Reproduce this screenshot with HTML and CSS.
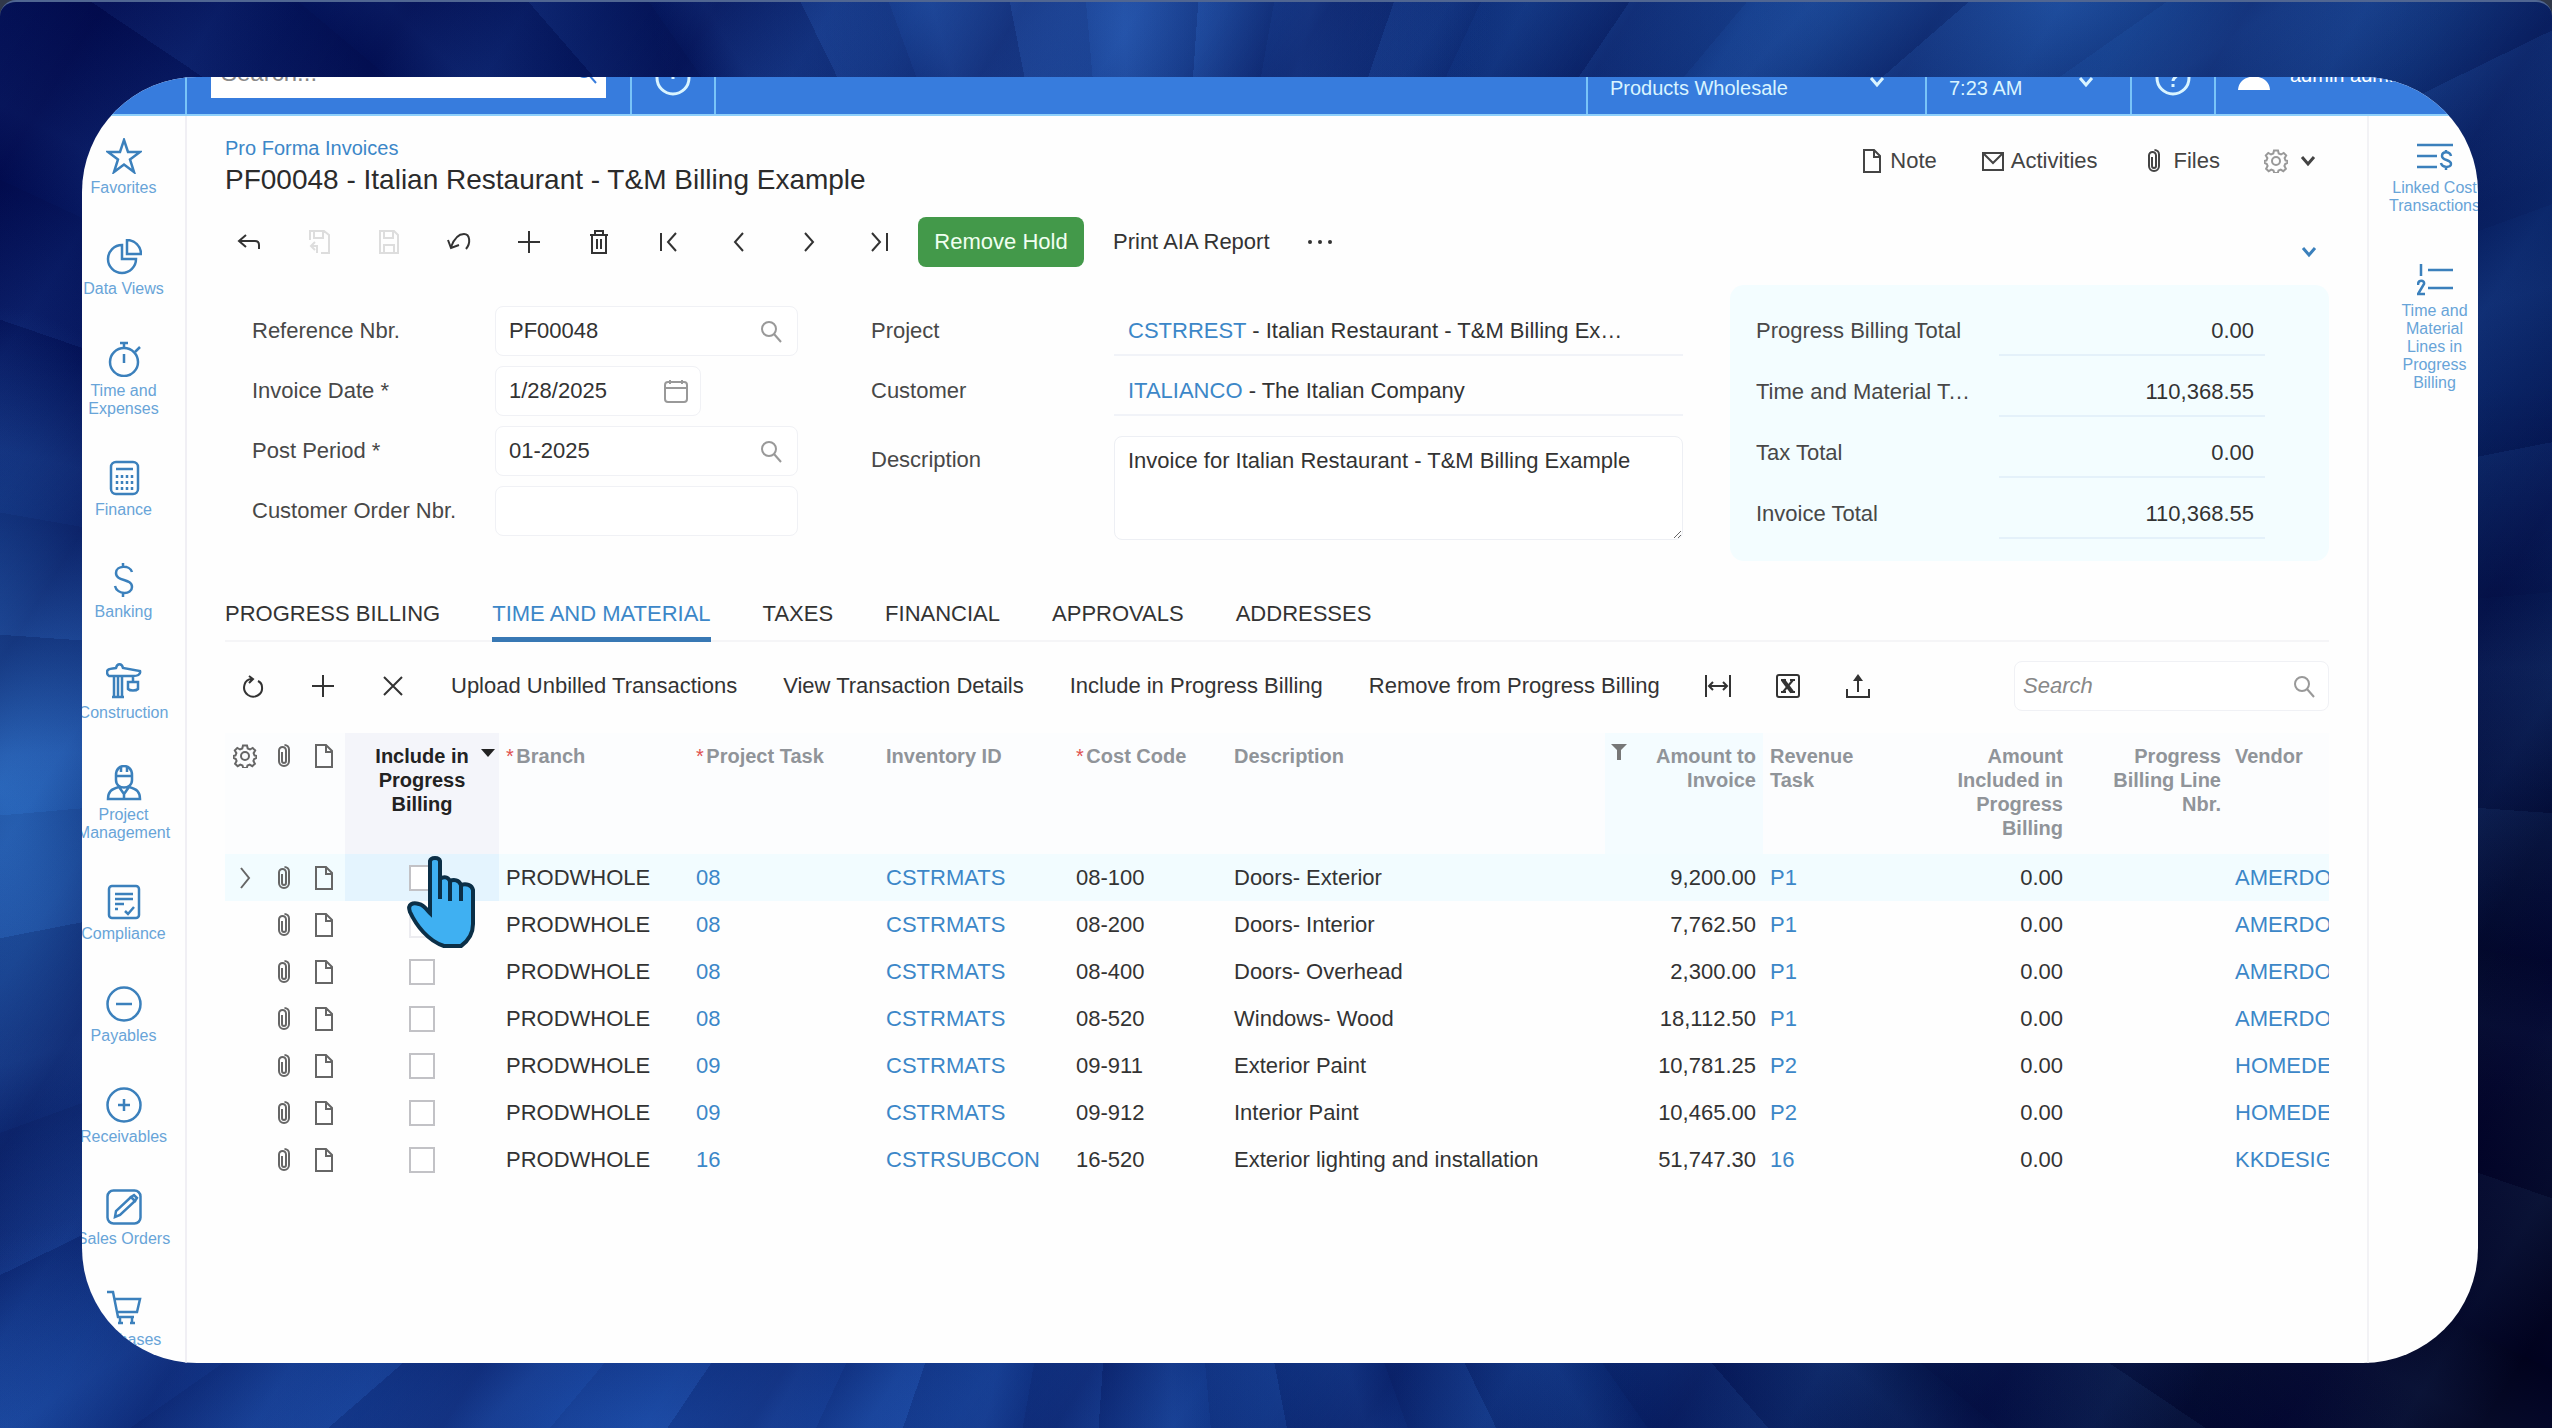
FILE: index.html
```html
<!DOCTYPE html>
<html lang="en">
<head>
<meta charset="utf-8">
<title>PF00048 - Pro Forma Invoices</title>
<link rel="stylesheet" href="styles.css">
</head>
<body>
<svg class="sprite" aria-hidden="true">
  <symbol id="i-clip" viewBox="0 0 24 24"><path d="M17 8v9a5 5 0 0 1-10 0V6.500a3.500 3.500 0 0 1 7 0V17a2 2 0 0 1-4 0V8M17 8V5.500A4.500 4.500 0 0 0 12.500 1"/></symbol>
  <symbol id="i-doc" viewBox="0 0 24 24"><path d="M4 1h10l6 6v16H4zM14 1v7h6"/></symbol>
  <symbol id="i-gear" viewBox="0 0 24 24"><circle cx="12" cy="12" r="4"/><path d="M10 1.500h4l.7 3 2.300 1 2.700-1.600 2.500 2.600-1.600 2.700.9 2.200 2 .6v2l-2.300 1-.8 2 1.500 2.700-2.600 2.500-2.600-1.600-2.200.9-.7 2.500h-3.600l-.7-2.500-2.200-.9-2.600 1.600-2.600-2.500 1.500-2.700-.8-2-2.300-1v-2l2-.6.9-2.200-1.600-2.700 2.500-2.600L7 5.500l2.300-1z"/></symbol>
  <symbol id="i-mail" viewBox="0 0 24 24"><path d="M2 4h20v17H2zM2 4l10 10L22 4"/></symbol>
  <symbol id="i-search" viewBox="0 0 24 24"><circle cx="10" cy="10" r="7"/><path d="M15 15l7 8"/></symbol>
  <symbol id="i-down" viewBox="0 0 24 24"><path d="M6 8l6 7 6-7"/></symbol>
  <symbol id="i-plus" viewBox="0 0 24 24"><path d="M12 1v22M1 12h22"/></symbol>
</svg>

<div class="stage">
<div class="card">
  <header class="topbar">
    <div class="logo-area"></div>
    <div class="bar-cell search-cell"><input class="top-search" type="text" aria-label="Search everywhere" placeholder="Search..."><svg class="ico top-mag"><use href="#i-search"/></svg></div>
    <button class="bar-cell low" aria-label="Recent"><svg class="round-ico" viewBox="0 0 36 36"><circle cx="18" cy="18" r="16"/><path d="M18 9v10"/></svg></button>
    <div class="bar-cell filler"></div>
    <button class="bar-cell branch"><span>Products Wholesale</span><svg class="ico bold"><use href="#i-down"/></svg></button>
    <button class="bar-cell clock"><span>7:23 AM</span><svg class="ico bold"><use href="#i-down"/></svg></button>
    <button class="bar-cell low" aria-label="Help"><svg class="round-ico" viewBox="0 0 36 36"><circle cx="18" cy="18" r="16"/><path d="M13 14c0-7 10-6 10-1 0 4-5 4-5 8M18 24v3"/></svg></button>
    <button class="bar-cell user"><svg class="user-ico" viewBox="0 0 32 32"><circle cx="16" cy="8" r="7"/><path d="M0 31c1-18 31-18 32 0z"/></svg><span>admin admin</span></button>
  </header>

  <div class="body">
    <nav class="sidebar">
      <a href="#"><svg viewBox="0 0 36 36"><path d="M18 2l4 12h12l-10 7.500 4 12.500-10-7.500L8 34l4-12.500L2 14h12z"/></svg>Favorites</a>
      <a href="#"><svg viewBox="0 0 36 36"><path d="M16 6a14 14 0 1 0 14 14H16zM21 1v14h14A14 14 0 0 0 21 1z"/></svg>Data Views</a>
      <a href="#"><svg viewBox="0 0 36 36"><circle cx="18" cy="21" r="14"/><path d="M14 2h8M18 2v5M29 11l5-5M18 13v9"/></svg>Time and<br>Expenses</a>
      <a href="#"><svg viewBox="0 0 36 36"><rect x="5" y="2" width="27" height="32" rx="5"/><path d="M10 9h17"/><path stroke-dasharray="3 3" d="M11 15v15M16 15v15M21 15v15M26 15v15"/></svg>Finance</a>
      <a href="#"><svg viewBox="0 0 36 36"><path d="M26 10c-2-7-16-7-16 1 0 9 16 5 16 14 0 8-15 8-17-1M17 1v4M17 31v4"/></svg>Banking</a>
      <a href="#"><svg viewBox="0 0 36 36"><path d="M1 9c0-4 5-3 9-4 1-5 6-5 7 0l17 3c1 4-3 5-7 5H3c-2-1-2-2-2-4zM8 13v20M12 13v20M16 13v20M6 34h12M27 13v5M22 19h10v7c-2 2-8 2-10 0z"/></svg>Construction</a>
      <a href="#"><svg viewBox="0 0 36 36"><path d="M9 11h18M10 10c0-12 16-12 16 0v5c0 10-16 10-16 0zM15 2v5M21 2v5M13 22C5 24 2 27 2 34h32c0-7-3-10-11-12l-5 7zM18 29v4"/></svg>Project<br>Management</a>
      <a href="#"><svg viewBox="0 0 36 36"><rect x="3" y="2" width="30" height="32" rx="3"/><path d="M9 10h18M9 15h18M9 20h9M9 25h3M19 27l3 3 6-7"/></svg>Compliance</a>
      <a href="#"><svg viewBox="0 0 36 36"><circle cx="18" cy="18" r="16.500"/><path d="M10 18h16"/></svg>Payables</a>
      <a href="#"><svg viewBox="0 0 36 36"><circle cx="18" cy="18" r="16.500"/><path d="M12 18h12M18 12v12"/></svg>Receivables</a>
      <a href="#"><svg viewBox="0 0 36 36"><rect x="1.500" y="1.500" width="33" height="33" rx="6"/><path d="M9 28l1-6L25 8l4 4-15 14zM25 8l3-2 3 3-2 3z"/></svg>Sales Orders</a>
      <a href="#"><svg viewBox="0 0 36 36"><path d="M1 2h6l5 25h16M8 9h26l-3 13H11M14 27v6M26 27v6M12 33h5M24 33h5"/></svg>Purchases</a>
    </nav>

    <main class="main">
      <div class="head">
        <div>
          <a class="crumb" href="#">Pro Forma Invoices</a>
          <h1>PF00048 - Italian Restaurant - T&amp;M Billing Example</h1>
        </div>
        <div class="head-actions">
          <button><svg class="ico"><use href="#i-doc"/></svg>Note</button>
          <button><svg class="ico"><use href="#i-mail"/></svg>Activities</button>
          <button class="files"><svg class="ico"><use href="#i-clip"/></svg>Files</button>
          <button class="cog" aria-label="Settings"><svg class="ico soft"><use href="#i-gear"/></svg><svg class="ico bold"><use href="#i-down"/></svg></button>
        </div>
      </div>

      <div class="toolbar">
        <button class="tb" aria-label="Back"><svg class="ico" viewBox="0 0 24 24"><path d="M9 5L2 11l7 6M2 11h16c3 0 4 2 4 4v4"/></svg></button>
        <button class="tb off" aria-label="Save and close"><svg class="ico" viewBox="0 0 24 24"><path d="M3 10V1h14l5 4v18h-8M7 1v7h9V1M8 12l-4 4 4 4M4 16h6v7"/></svg></button>
        <button class="tb off" aria-label="Save"><svg class="ico" viewBox="0 0 24 24"><path d="M3 1h14l4 4v18H3zM7 1v7h9V1M7 23v-8h10v8"/></svg></button>
        <button class="tb" aria-label="Undo"><svg class="ico" viewBox="0 0 24 24"><path d="M1 10l3 8 8-3M4 17C7 9 12 4 17 4c6 0 7 9 2 15"/></svg></button>
        <button class="tb" aria-label="Add"><svg class="ico"><use href="#i-plus"/></svg></button>
        <button class="tb" aria-label="Delete"><svg class="ico" viewBox="0 0 24 24"><path d="M3 5h18M8 5V1h8v4M5 5v18h14V5M10 9v10M14 9v10"/></svg></button>
        <button class="tb" aria-label="First"><svg class="ico" viewBox="0 0 24 24"><path d="M4 3v18M19 3l-8 9 8 9"/></svg></button>
        <button class="tb" aria-label="Previous"><svg class="ico" viewBox="0 0 24 24"><path d="M16 3l-8 9 8 9"/></svg></button>
        <button class="tb" aria-label="Next"><svg class="ico" viewBox="0 0 24 24"><path d="M8 3l8 9-8 9"/></svg></button>
        <button class="tb" aria-label="Last"><svg class="ico" viewBox="0 0 24 24"><path d="M20 3v18M5 3l8 9-8 9"/></svg></button>
        <button class="hold">Remove Hold</button>
        <button class="report">Print AIA Report</button>
        <button class="tb" aria-label="More"><svg class="ico dots" viewBox="0 0 24 24"><circle cx="2" cy="12" r="2"/><circle cx="12" cy="12" r="2"/><circle cx="22" cy="12" r="2"/></svg></button>
        <button class="collapse" aria-label="Collapse"><svg class="ico bold"><use href="#i-down"/></svg></button>
      </div>

      <form class="summary">
        <div class="col">
          <div class="row"><label for="ref">Reference Nbr.</label><div class="field"><input id="ref" value="PF00048"><svg class="ico soft"><use href="#i-search"/></svg></div></div>
          <div class="row"><label for="date">Invoice Date *</label><div class="field short"><input id="date" value="1/28/2025"><svg class="ico soft" viewBox="0 0 24 24"><rect x="1" y="3" width="22" height="20" rx="3"/><path d="M1 9h22M6 1v4M18 1v4"/></svg></div></div>
          <div class="row"><label for="period">Post Period *</label><div class="field"><input id="period" value="01-2025"><svg class="ico soft"><use href="#i-search"/></svg></div></div>
          <div class="row"><label for="order">Customer Order Nbr.</label><div class="field"><input id="order" value=""></div></div>
        </div>
        <div class="col mid">
          <div class="row"><span class="label">Project</span><div class="static"><a href="#">CSTRREST</a> - Italian Restaurant - T&amp;M Billing Example</div></div>
          <div class="row"><span class="label">Customer</span><div class="static"><a href="#">ITALIANCO</a> - The Italian Company</div></div>
          <div class="row area"><label for="desc">Description</label><textarea id="desc">Invoice for Italian Restaurant - T&amp;M Billing Example</textarea></div>
        </div>
        <div class="col totals">
          <div class="row"><span class="label">Progress Billing Total</span><output>0.00</output></div>
          <div class="row"><span class="label">Time and Material Total</span><output>110,368.55</output></div>
          <div class="row"><span class="label">Tax Total</span><output>0.00</output></div>
          <div class="row"><span class="label">Invoice Total</span><output>110,368.55</output></div>
        </div>
      </form>

      <div class="tabs" role="tablist">
        <button role="tab">PROGRESS BILLING</button>
        <button role="tab" class="active" aria-selected="true">TIME AND MATERIAL</button>
        <button role="tab">TAXES</button>
        <button role="tab">FINANCIAL</button>
        <button role="tab">APPROVALS</button>
        <button role="tab">ADDRESSES</button>
      </div>

      <div class="gridbar">
        <button class="tb" aria-label="Refresh"><svg class="ico" viewBox="0 0 24 24"><path d="M8 2l4 3-4 4M12 5C3 4 0 16 7 21c6 4 15 0 14-8 0-3-2-5-4-6"/></svg></button>
        <button class="tb" aria-label="Add row"><svg class="ico"><use href="#i-plus"/></svg></button>
        <button class="tb" aria-label="Delete row"><svg class="ico" viewBox="0 0 24 24"><path d="M3 3l18 18M21 3L3 21"/></svg></button>
        <button class="txt">Upload Unbilled Transactions</button>
        <button class="txt">View Transaction Details</button>
        <button class="txt">Include in Progress Billing</button>
        <button class="txt">Remove from Progress Billing</button>
        <button class="tb" aria-label="Fit columns"><svg class="ico wide" viewBox="0 0 28 24"><path d="M2 1v22M26 1v22M6 12h16M9 8l-4 4 4 4M19 8l4 4-4 4"/></svg></button>
        <button class="tb" aria-label="Export"><svg class="ico" viewBox="0 0 24 24"><rect x="1" y="1" width="22" height="22" rx="2"/><path class="heavy" d="M7 6l9 12"/><path d="M17 6L7 18M5 6h5M14 18h5M14 6h5M5 18h5"/></svg></button>
        <button class="tb" aria-label="Upload"><svg class="ico" viewBox="0 0 24 24"><path d="M1 15v8h22v-8M12 18V3"/><path class="solid" d="M12 0l5 7H7z"/></svg></button>
        <div class="field grid-search"><input type="text" aria-label="Search rows" placeholder="Search"><svg class="ico soft"><use href="#i-search"/></svg></div>
      </div>

      <div class="grid-wrap">
      <table>
        <colgroup><col class="c-i"><col class="c-i"><col class="c-d"><col class="c-inc"><col class="c-txt"><col class="c-txt"><col class="c-txt"><col class="c-num"><col><col class="c-num"><col class="c-num"><col class="c-amt"><col class="c-num"><col class="c-ven"></colgroup>
        <thead><tr>
          <th class="ic"><svg class="ico"><use href="#i-gear"/></svg></th>
          <th class="ic"><svg class="ico"><use href="#i-clip"/></svg></th>
          <th class="ic"><svg class="ico"><use href="#i-doc"/></svg></th>
          <th class="inc">Include in Progress Billing<span class="sort"></span></th>
          <th><i>*</i> Branch</th><th><i>*</i> Project Task</th><th>Inventory ID</th><th><i>*</i> Cost Code</th><th>Description</th>
          <th class="num filtered"><svg class="funnel" viewBox="0 0 16 16"><path d="M0 0h16L10 6v10H6V6z"/></svg>Amount to Invoice</th>
          <th>Revenue<br>Task</th><th class="num">Amount Included in Progress Billing</th><th class="num">Progress Billing Line Nbr.</th><th>Vendor</th>
        </tr></thead>
        <tbody>
          <tr class="current"><td class="ic"><svg class="ico" viewBox="0 0 24 24"><path d="M8 2l8 10-8 10"/></svg></td><td class="ic"><svg class="ico"><use href="#i-clip"/></svg></td><td class="ic"><svg class="ico"><use href="#i-doc"/></svg></td><td class="inc"><input type="checkbox" aria-label="Include 08-100"><svg class="pointer" viewBox="0 0 68 92" aria-hidden="true"><path d="M22 4c1-4 9-4 10 0v18c4-3 8-2 10 2 4-2 9-1 11 4 5-2 11 0 12 5v34c0 10-5 17-12 22H36C20 84 8 68 2 55c-3-8 3-10 9-8 5 1 8 6 11 9z"/><path d="M32 22v20M42 24v20M53 28v16"/></svg></td><td>PRODWHOLE</td><td><a href="#">08</a></td><td><a href="#">CSTRMATS</a></td><td>08-100</td><td>Doors- Exterior</td><td class="num">9,200.00</td><td><a href="#">P1</a></td><td class="num">0.00</td><td></td><td><a href="#">AMERDOOR</a></td></tr>
          <tr><td></td><td class="ic"><svg class="ico"><use href="#i-clip"/></svg></td><td class="ic"><svg class="ico"><use href="#i-doc"/></svg></td><td class="inc"><input class="faint" type="checkbox" aria-label="Include 08-200"></td><td>PRODWHOLE</td><td><a href="#">08</a></td><td><a href="#">CSTRMATS</a></td><td>08-200</td><td>Doors- Interior</td><td class="num">7,762.50</td><td><a href="#">P1</a></td><td class="num">0.00</td><td></td><td><a href="#">AMERDOOR</a></td></tr>
          <tr><td></td><td class="ic"><svg class="ico"><use href="#i-clip"/></svg></td><td class="ic"><svg class="ico"><use href="#i-doc"/></svg></td><td class="inc"><input type="checkbox" aria-label="Include 08-400"></td><td>PRODWHOLE</td><td><a href="#">08</a></td><td><a href="#">CSTRMATS</a></td><td>08-400</td><td>Doors- Overhead</td><td class="num">2,300.00</td><td><a href="#">P1</a></td><td class="num">0.00</td><td></td><td><a href="#">AMERDOOR</a></td></tr>
          <tr><td></td><td class="ic"><svg class="ico"><use href="#i-clip"/></svg></td><td class="ic"><svg class="ico"><use href="#i-doc"/></svg></td><td class="inc"><input type="checkbox" aria-label="Include 08-520"></td><td>PRODWHOLE</td><td><a href="#">08</a></td><td><a href="#">CSTRMATS</a></td><td>08-520</td><td>Windows- Wood</td><td class="num">18,112.50</td><td><a href="#">P1</a></td><td class="num">0.00</td><td></td><td><a href="#">AMERDOOR</a></td></tr>
          <tr><td></td><td class="ic"><svg class="ico"><use href="#i-clip"/></svg></td><td class="ic"><svg class="ico"><use href="#i-doc"/></svg></td><td class="inc"><input type="checkbox" aria-label="Include 09-911"></td><td>PRODWHOLE</td><td><a href="#">09</a></td><td><a href="#">CSTRMATS</a></td><td>09-911</td><td>Exterior Paint</td><td class="num">10,781.25</td><td><a href="#">P2</a></td><td class="num">0.00</td><td></td><td><a href="#">HOMEDEPOT</a></td></tr>
          <tr><td></td><td class="ic"><svg class="ico"><use href="#i-clip"/></svg></td><td class="ic"><svg class="ico"><use href="#i-doc"/></svg></td><td class="inc"><input type="checkbox" aria-label="Include 09-912"></td><td>PRODWHOLE</td><td><a href="#">09</a></td><td><a href="#">CSTRMATS</a></td><td>09-912</td><td>Interior Paint</td><td class="num">10,465.00</td><td><a href="#">P2</a></td><td class="num">0.00</td><td></td><td><a href="#">HOMEDEPOT</a></td></tr>
          <tr><td></td><td class="ic"><svg class="ico"><use href="#i-clip"/></svg></td><td class="ic"><svg class="ico"><use href="#i-doc"/></svg></td><td class="inc"><input type="checkbox" aria-label="Include 16-520"></td><td>PRODWHOLE</td><td><a href="#">16</a></td><td><a href="#">CSTRSUBCON</a></td><td>16-520</td><td>Exterior lighting and installation</td><td class="num">51,747.30</td><td><a href="#">16</a></td><td class="num">0.00</td><td></td><td><a href="#">KKDESIGN</a></td></tr>
        </tbody>
      </table>
      </div>
    </main>

    <aside class="rail">
      <a href="#"><svg viewBox="0 0 36 36"><path d="M0 7h36M0 18h20M0 29h20"/><path d="M34 18c-1-5-9-5-9 0 0 5 9 3 9 8 0 4-9 4-10-1M29 12v3M29 29v3"/></svg>Linked Cost<br>Transactions</a>
      <a href="#"><svg viewBox="0 0 36 36"><path d="M4 3v12M11 9h25M11 27h25M1 24c0-6 7-5 6-1L1 33h7"/></svg>Time and<br>Material<br>Lines in<br>Progress<br>Billing</a>
    </aside>
  </div>
</div>
</div>
</body>
</html>
```
FILE: styles.css
```css
* { box-sizing: border-box; }

html { background: #30384a; }

body {
  margin: 0;
  font-family: "Liberation Sans", Arial, sans-serif;
  font-size: 22px;
  line-height: 28px;
  color: #333;
}

button, input, textarea { font: inherit; color: inherit; }
button { border: 0; padding: 0; background: none; white-space: nowrap; }
a { color: #3c87c8; text-decoration: none; }

.sprite { display: none; }

.ico {
  width: 24px;
  height: 24px;
  flex: none;
  fill: none;
  stroke: currentColor;
  stroke-width: 2;
}
.soft { color: #999; }
.bold { stroke-width: 3; }

/* Decorated backdrop */
.stage {
  display: flex;
  min-height: 100vh;
  padding: 75px 74px 65px 82px;
  border-top: 2px solid #506692;
  border-radius: 16px 16px 0 0;
  background:
    repeating-conic-gradient(from 4deg at 45% 50%, rgba(90, 150, 240, 0.06) 0deg, rgba(0, 0, 50, 0.1) 6deg, rgba(0, 0, 50, 0.02) 6deg, rgba(90, 150, 240, 0.06) 9deg, rgba(0, 0, 50, 0.12) 15deg),
    repeating-linear-gradient(122deg, rgba(0, 0, 60, 0) 0, rgba(0, 0, 60, 0.25) 90px, rgba(60, 120, 220, 0.08) 190px, rgba(0, 0, 60, 0) 260px),
    radial-gradient(ellipse 240px 480px at 0 55%, #2c6fc4, rgba(44, 111, 196, 0)),
    radial-gradient(ellipse 420px 300px at 42% 0, #2455ac, rgba(36, 85, 172, 0)),
    radial-gradient(ellipse 700px 260px at 80% 0, #1c4c9c, rgba(28, 76, 156, 0)),
    radial-gradient(ellipse 1000px 260px at 26% 100%, #1a4aa6, rgba(26, 74, 166, 0)),
    radial-gradient(ellipse 900px 900px at 100% 90%, #01021c 20%, rgba(1, 2, 28, 0)),
    radial-gradient(ellipse 500px 400px at 0 100%, #143d90, rgba(20, 61, 144, 0)),
    linear-gradient(100deg, #020f55, #0b2a74 60%, #07205f);
}

.card {
  flex: 1;
  min-width: 0;
  display: flex;
  flex-direction: column;
  overflow: hidden;
  border-radius: 115px;
  background: #fefefe;
}

.topbar {
  display: flex;
  height: 80px;
  margin: -41px -22px 0;
  flex: none;
  background: #377cdd;
  border-bottom: 2px solid #8fd0fa;
  color: #d9f4ff;
  font-size: 20px;
}
.logo-area { width: 125px; }
.bar-cell {
  display: flex;
  align-items: center;
  justify-content: center;
  min-width: 84px;
  border-left: 2px solid #79c4f8;
}
.low { padding-top: 6px; }
.search-cell { width: 445px; position: relative; }
.top-search {
  width: 395px;
  height: 50px;
  margin-top: -4px;
  padding: 0 10px;
  border: 0;
  background: #fff;
  font-size: 24px;
}
.top-search::placeholder, .grid-search input::placeholder { color: #888; opacity: 1; }
.top-mag { position: absolute; right: 32px; top: 24px; color: #377cdd; }
.round-ico { width: 36px; height: 36px; fill: none; stroke: #d9f4ff; stroke-width: 3; }
.filler { flex: 1; }
.branch, .clock { justify-content: space-between; padding: 14px 36px 0 22px; color: #d9f4ff; }
.branch { width: 339px; }
.clock { width: 205px; padding-right: 32px; }
.branch span, .clock span { padding-top: 12px; }
.user { width: 286px; justify-content: flex-start; padding-left: 22px; gap: 20px; color: #fff; }
.user-ico { width: 32px; height: 32px; fill: #fff; }

.body { flex: 1; display: flex; margin: 0 -22px; }

.sidebar, .rail {
  flex: none;
  display: flex;
  flex-direction: column;
  padding: 22px 0 14px;
  font-size: 16px;
  line-height: 18px;
  text-align: center;
}
.sidebar { width: 127px; padding-left: 2px; justify-content: space-between; border-right: 2px solid #f0eff4; }
.rail { width: 133px; gap: 46px; border-left: 2px solid #f2f2f5; }
.sidebar a, .rail a {
  display: flex;
  flex-direction: column;
  align-items: center;
  color: #68a4d8;
}
.sidebar svg, .rail svg {
  width: 36px;
  height: 36px;
  margin-bottom: 5px;
  fill: none;
  stroke: #3b80bc;
  stroke-width: 2.5;
}

.main { flex: 1; min-width: 0; padding: 20px 38px 0 38px; }

.head { display: flex; justify-content: space-between; align-items: flex-start; }
.crumb { display: block; font-size: 20px; line-height: 24px; }
h1 { margin: 4px 0 0; font-size: 28px; font-weight: 400; line-height: 32px; color: #2b2b2b; }
.head-actions { display: flex; gap: 44px; height: 50px; padding-right: 9px; }
.head-actions button { display: flex; align-items: center; gap: 6px; color: #444; }
.head-actions .files { gap: 8px; }
.head-actions .cog { gap: 8px; }

.toolbar { display: flex; align-items: center; height: 50px; margin: 21px 0 0 -11px; }
.tb { display: flex; align-items: center; justify-content: center; width: 70px; height: 50px; }
.off { color: #ddd; }
.dots { fill: currentColor; stroke: none; }
.hold {
  width: 166px;
  height: 50px;
  margin-left: 4px;
  border-radius: 8px;
  background: #43994a;
  color: #f0fff0;
}
.report { margin: 0 15px 0 29px; }
.collapse { margin-left: auto; align-self: flex-end; height: 30px; padding-right: 8px; color: #3b80bc; }
.collapse svg { display: block; }

.summary { display: grid; grid-template-columns: 646fr 859fr 599fr; margin-top: 18px; }
.col { display: flex; flex-direction: column; gap: 10px; padding: 21px 0; min-width: 0; }
.col:first-child { padding-left: 27px; }
.mid { padding-right: 47px; }
.row { display: flex; align-items: center; min-height: 50px; }
.row label, .row .label { width: 243px; flex: none; color: #484848; }
.field {
  display: flex;
  align-items: center;
  width: 303px;
  height: 50px;
  padding: 0 14px 0 13px;
  border: 1px solid #f0f1f5;
  border-radius: 8px;
  background: #fff;
}
.field.short { width: 206px; padding-right: 12px; }
.field input { flex: 1; min-width: 0; width: 100%; padding: 0; border: 0; background: none; outline: 0; }
.static {
  flex: 1;
  min-width: 0;
  height: 50px;
  padding: 0 50px 0 14px;
  line-height: 50px;
  border-bottom: 2px solid #f1f3f8;
  overflow: hidden;
  white-space: nowrap;
  text-overflow: ellipsis;
}
.area { align-items: flex-start; padding-top: 10px; }
.area label { padding-top: 10px; }
textarea {
  flex: 1;
  min-width: 0;
  height: 104px;
  padding: 10px 13px;
  border: 1px solid #edeff4;
  border-radius: 8px;
  background: #fff;
  resize: vertical;
}
.totals { gap: 11px; padding: 21px 64px 21px 26px; border-radius: 14px; background: #f3fdff; }
.totals .label {
  padding-right: 24px;
  overflow: hidden;
  white-space: nowrap;
  text-overflow: ellipsis;
}
.totals output {
  flex: 1;
  height: 50px;
  padding-right: 11px;
  line-height: 50px;
  text-align: right;
  border-bottom: 2px solid #e4f1fa;
}

.tabs { display: flex; gap: 52px; margin-top: 39px; border-bottom: 2px solid #f5f5f7; }
.tabs button { padding-bottom: 9px; border-bottom: 5px solid transparent; line-height: 28px; margin-bottom: -2px; }
.tabs .active { color: #3c87c8; border-bottom-color: #3878b4; border-radius: 3px 3px 0 0; }

.gridbar { display: flex; align-items: center; margin: 19px 0 22px -7px; }
.txt { padding: 0 23px; }
.gridbar .wide { width: 28px; }
.heavy { stroke-width: 4; }
.solid { fill: currentColor; stroke: none; }
.grid-search { width: 315px; margin-left: auto; padding: 0 12px 0 8px; }
.grid-search input { font-style: italic; }

.grid-wrap { overflow: hidden; }
table { width: 100%; border-collapse: collapse; table-layout: fixed; }
.c-i { width: 39px; }
.c-d { width: 42px; }
.c-inc { width: 154px; }
.c-txt { width: 190px; }
.c-num { width: 158px; }
.c-amt { width: 149px; }
.c-ven { width: 101px; }
th {
  height: 121px;
  padding: 11px 7px;
  font-size: 20px;
  line-height: 24px;
  text-align: left;
  vertical-align: top;
  color: #909499;
  background: #fcfdfe;
}
th i { color: #e05050; font-style: normal; font-weight: 400; margin-right: -3px; }
th .ico, td .ico { display: block; margin: auto; color: #666; }
td { height: 47px; padding: 0 7px; white-space: nowrap; overflow: hidden; }
td:last-child { padding-right: 0; }
.num { text-align: right; }
.ic { padding-left: 0; padding-right: 0; }
.inc { position: relative; text-align: center; overflow: visible; }
th.inc { color: #222; background: #f4f5fa; }
th.filtered { position: relative; background: #f4fcff; }
.sort {
  position: absolute;
  top: 16px;
  right: 4px;
  border: 7px solid transparent;
  border-top: 8px solid #222;
  border-bottom: 0;
}
.funnel { position: absolute; left: 6px; top: 11px; width: 16px; height: 16px; fill: #777; }
.current td { background: #f2fcff; }
.current .inc { background: #e4f4fe; }
td input {
  appearance: none;
  display: block;
  width: 26px;
  height: 26px;
  margin: auto;
  border: 2px solid #c2c2c6;
  background: #fff;
}
td .faint { border-color: #ececf0; }
.pointer {
  position: absolute;
  z-index: 2;
  left: 63px;
  top: 3px;
  width: 68px;
  height: 92px;
  fill: #3fb0f2;
  stroke: #0b2f47;
  stroke-width: 4;
  overflow: visible;
}
```
